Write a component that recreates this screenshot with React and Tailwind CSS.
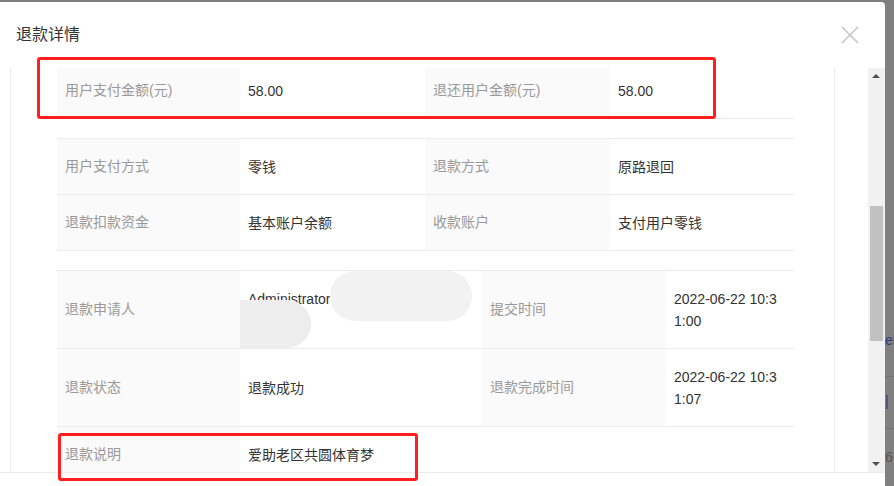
import React from "react";

const font = { fontFamily: '"Liberation Sans", "Noto Sans CJK SC", sans-serif' };

const Label = ({ children }) => (
  <div className="flex items-center bg-[#fafafa] px-2 text-[14px] text-[#999]">{children}</div>
);

const Value = ({ children }) => (
  <div className="flex items-center px-2 text-[14px] leading-[22px] text-[#333] break-all">{children}</div>
);

const Row = ({ cols, h, children }) => (
  <div className={`grid ${cols} ${h} border-b border-[#ebebeb]`}>{children}</div>
);

const cols4 = "grid-cols-[183px_185px_185px_184px]";
const cols3 = "grid-cols-[183px_242px_184px_128px]";

const CloseIcon = () => (
  <svg width="18" height="18" viewBox="0 0 18 18" fill="none">
    <path d="M1 1L17 17M17 1L1 17" stroke="#c6c6c6" strokeWidth="1.6" />
  </svg>
);

export default function App() {
  return (
    <div className="relative flex h-[486px] w-[894px] overflow-hidden bg-[#808080]" style={font}>
      <div className="relative mt-[2px] flex h-[484px] w-[885px] flex-col rounded-tr-[4px] bg-white">
        {/* header */}
        <div className="flex h-[66px] items-center justify-between pl-4 pr-[26px]">
          <span className="text-[16px] text-[#333]">退款详情</span>
          <CloseIcon />
        </div>

        {/* body */}
        <div className="flex h-[404px]">
          <div className="w-[10px]" />
          <div className="w-[825px] overflow-hidden border-x border-[#ebebeb] pl-[46px]">
            <div className="-mt-[6px] w-[737px]">
              <div className="border-t border-[#ebebeb]">
                <Row cols={cols4} h="h-[56px]">
                  <Label>用户支付金额(元)</Label>
                  <Value>58.00</Value>
                  <Label>退还用户金额(元)</Label>
                  <Value>58.00</Value>
                </Row>
              </div>

              <div className="mt-[19px] border-t border-[#ebebeb]">
                <Row cols={cols4} h="h-[56px]">
                  <Label>用户支付方式</Label>
                  <Value>零钱</Value>
                  <Label>退款方式</Label>
                  <Value>原路退回</Value>
                </Row>
                <Row cols={cols4} h="h-[56px]">
                  <Label>退款扣款资金</Label>
                  <Value>基本账户余额</Value>
                  <Label>收款账户</Label>
                  <Value>支付用户零钱</Value>
                </Row>
              </div>

              <div className="mt-[19px] border-t border-[#ebebeb]">
                <Row cols={cols3} h="h-[78px]">
                  <Label>退款申请人</Label>
                  <div className="relative flex flex-col justify-center px-2 text-[14px] leading-[22px] text-[#333]">
                    <span>Administrator</span>
                    <span className="text-transparent">admin</span>
                    <div className="absolute left-[90px] top-[0px] h-[50px] w-[142px] rounded-full bg-[#f2f2f2]" />
                    <div className="absolute left-0 top-[29px] h-[48px] w-[71px] rounded-r-[36px] bg-[#ededed]" />
                  </div>
                  <Label>提交时间</Label>
                  <Value>2022-06-22 10:31:00</Value>
                </Row>
                <Row cols={cols3} h="h-[78px]">
                  <Label>退款状态</Label>
                  <Value>退款成功</Value>
                  <Label>退款完成时间</Label>
                  <Value>2022-06-22 10:31:07</Value>
                </Row>
                <div className="grid h-[56px] grid-cols-[183px_1fr] border-b border-[#ebebeb]">
                  <Label>退款说明</Label>
                  <Value>爱助老区共圆体育梦</Value>
                </div>
              </div>
            </div>
          </div>
          <div className="flex-1" />
          {/* scrollbar */}
          <div className="relative w-[17px] bg-[#f1f1f1]">
            <div className="absolute left-[4px] top-[6px] h-0 w-0 border-x-[4px] border-b-[4px] border-x-transparent border-b-[#505050]" />
            <div className="absolute left-[2px] top-[138px] h-[135px] w-[13px] bg-[#c1c1c1]" />
            <div className="absolute bottom-[6px] left-[4px] h-0 w-0 border-x-[4px] border-t-[4px] border-x-transparent border-t-[#505050]" />
          </div>
        </div>

        {/* footer */}
        <div className="flex-1 border-t border-[#ebebeb]" />

        {/* annotation boxes */}
        <div className="absolute left-[37px] top-[55px] h-[62px] w-[679px] rounded-[3px] border-[3px] border-[#ff1f1f]" />
        <div className="absolute left-[58px] top-[431px] h-[48px] w-[360px] rounded-[3px] border-[3px] border-[#ff1f1f]" />
      </div>

      {/* dimmed page behind */}
      <div className="flex flex-1 flex-col overflow-hidden pt-[326px] text-[14px]">
        <span className="leading-[28px] text-[#2c3e7a]">el</span>
        <div className="mt-[22px] h-px bg-[#737373]" />
        <span className="mt-[13px] leading-[22px] text-[#2c3e7a]">|</span>
        <div className="mt-[16px] h-px bg-[#737373]" />
        <span className="mt-[18px] leading-[20px] text-[#555]">6-</span>
      </div>
    </div>
  );
}
